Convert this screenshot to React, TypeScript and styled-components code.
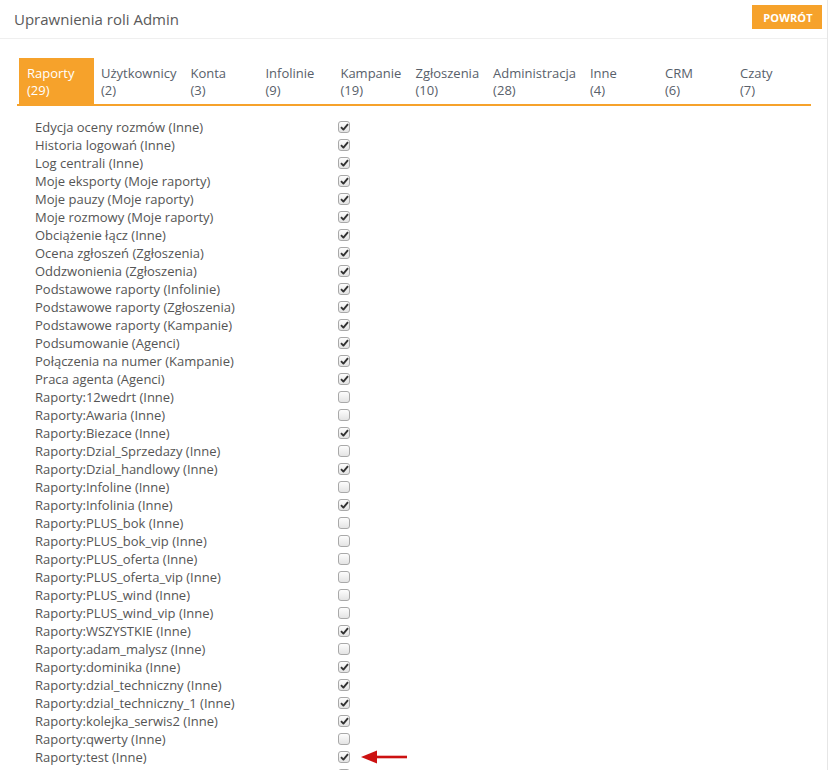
import React from "react";
import styled, { createGlobalStyle } from "styled-components";

const GlobalStyle = createGlobalStyle`
  html, body { margin: 0; padding: 0; background: #fff; }
  body {
    font-family: "Open Sans", "Liberation Sans", Arial, sans-serif;
    font-size: 13px;
    color: #555;
  }
  * { box-sizing: border-box; }
`;

const Panel = styled.div`
  width: 828px;
  min-height: 770px;
  border-right: 1px solid #e6e6e6;
  background: #fff;
`;

const Header = styled.div`
  display: flex;
  justify-content: space-between;
  align-items: flex-start;
  height: 39px;
  padding: 5px 5px 0 14px;
  border-bottom: 1px solid #efefef;
`;

const Title = styled.h1`
  margin: 0;
  padding-top: 4px;
  font-size: 15px;
  line-height: 20px;
  font-weight: 400;
  color: #5a5a5a;
`;

const BackButton = styled.button`
  width: 70px;
  height: 24px;
  border: none;
  padding: 0 0 0 2px;
  background: #f6a22b;
  color: #fff;
  font-family: "Open Sans", "Liberation Sans", Arial, sans-serif;
  font-weight: 700;
  font-size: 11px;
  letter-spacing: 0.1px;
  text-transform: uppercase;
  cursor: pointer;
`;

const Body = styled.div`
  padding: 19px 17px 0 17px;
`;

const TabBar = styled.div`
  display: flex;
  width: 794px;
  padding-left: 2px;
  border-bottom: 2px solid #f6a22b;
`;

const Tab = styled.div<{ $active?: boolean }>`
  min-width: 75px;
  padding: 7px 7px 5px ${(p) => (p.$active ? "8px" : "7px")};
  line-height: 17px;
  font-size: 13px;
  color: ${(p) => (p.$active ? "#fff" : "#58606a")};
  background: ${(p) => (p.$active ? "#f6a22b" : "transparent")};
  cursor: pointer;
`;

const List = styled.div`
  margin-top: 12px;
  padding-left: 18px;
`;

const Row = styled.div`
  position: relative;
  display: grid;
  grid-template-columns: 303px 12px;
  align-items: center;
  height: 18px;
  line-height: 18px;
`;

const Label = styled.span`
  white-space: nowrap;
  color: #555;
`;

const Box = styled.span`
  display: flex;
  align-items: center;
  justify-content: center;
  width: 12px;
  height: 12px;
  margin-top: -1px;
  border: 1px solid #a9a9a9;
  border-radius: 3px;
  background: linear-gradient(#fdfdfd, #e4e4e4);
`;

const Arrow = styled.svg`
  position: absolute;
  left: 326px;
  top: 2px;
`;

const tabs = [
  ["Raporty", 29],
  ["Użytkownicy", 2],
  ["Konta", 3],
  ["Infolinie", 9],
  ["Kampanie", 19],
  ["Zgłoszenia", 10],
  ["Administracja", 28],
  ["Inne", 4],
  ["CRM", 6],
  ["Czaty", 7],
] as const;

const rows: [string, boolean][] = [
  ["Edycja oceny rozmów (Inne)", true],
  ["Historia logowań (Inne)", true],
  ["Log centrali (Inne)", true],
  ["Moje eksporty (Moje raporty)", true],
  ["Moje pauzy (Moje raporty)", true],
  ["Moje rozmowy (Moje raporty)", true],
  ["Obciążenie łącz (Inne)", true],
  ["Ocena zgłoszeń (Zgłoszenia)", true],
  ["Oddzwonienia (Zgłoszenia)", true],
  ["Podstawowe raporty (Infolinie)", true],
  ["Podstawowe raporty (Zgłoszenia)", true],
  ["Podstawowe raporty (Kampanie)", true],
  ["Podsumowanie (Agenci)", true],
  ["Połączenia na numer (Kampanie)", true],
  ["Praca agenta (Agenci)", true],
  ["Raporty:12wedrt (Inne)", false],
  ["Raporty:Awaria (Inne)", false],
  ["Raporty:Biezace (Inne)", true],
  ["Raporty:Dzial_Sprzedazy (Inne)", false],
  ["Raporty:Dzial_handlowy (Inne)", true],
  ["Raporty:Infoline (Inne)", false],
  ["Raporty:Infolinia (Inne)", true],
  ["Raporty:PLUS_bok (Inne)", false],
  ["Raporty:PLUS_bok_vip (Inne)", false],
  ["Raporty:PLUS_oferta (Inne)", false],
  ["Raporty:PLUS_oferta_vip (Inne)", false],
  ["Raporty:PLUS_wind (Inne)", false],
  ["Raporty:PLUS_wind_vip (Inne)", false],
  ["Raporty:WSZYSTKIE (Inne)", true],
  ["Raporty:adam_malysz (Inne)", false],
  ["Raporty:dominika (Inne)", true],
  ["Raporty:dzial_techniczny (Inne)", true],
  ["Raporty:dzial_techniczny_1 (Inne)", true],
  ["Raporty:kolejka_serwis2 (Inne)", true],
  ["Raporty:qwerty (Inne)", false],
  ["Raporty:test (Inne)", true],
  ["", false],
];

const Check = () => (
  <svg width="9" height="8" viewBox="0 0 9 8">
    <path d="M1 4.2 L3.4 6.6 L8 1.2" fill="none" stroke="#333" strokeWidth="1.9" strokeLinejoin="round" />
  </svg>
);

export default function App() {
  return (
    <>
      <GlobalStyle />
      <Panel>
        <Header>
          <Title>Uprawnienia roli Admin</Title>
          <BackButton>Powrót</BackButton>
        </Header>
        <Body>
          <TabBar>
            {tabs.map(([name, count], i) => (
              <Tab key={name} $active={i === 0}>
                {name}
                <br />({count})
              </Tab>
            ))}
          </TabBar>
          <List>
            {rows.map(([label, checked], i) => (
              <Row key={i}>
                <Label>{label}</Label>
                <Box>{checked && <Check />}</Box>
                {label === "Raporty:test (Inne)" && (
                  <Arrow width="48" height="14" viewBox="0 0 48 14">
                    <polygon points="0,7 16,0.5 16,13.5" fill="#cc1111" />
                    <rect x="14" y="5.7" width="32" height="2.6" fill="#cc1111" />
                  </Arrow>
                )}
              </Row>
            ))}
          </List>
        </Body>
      </Panel>
    </>
  );
}
